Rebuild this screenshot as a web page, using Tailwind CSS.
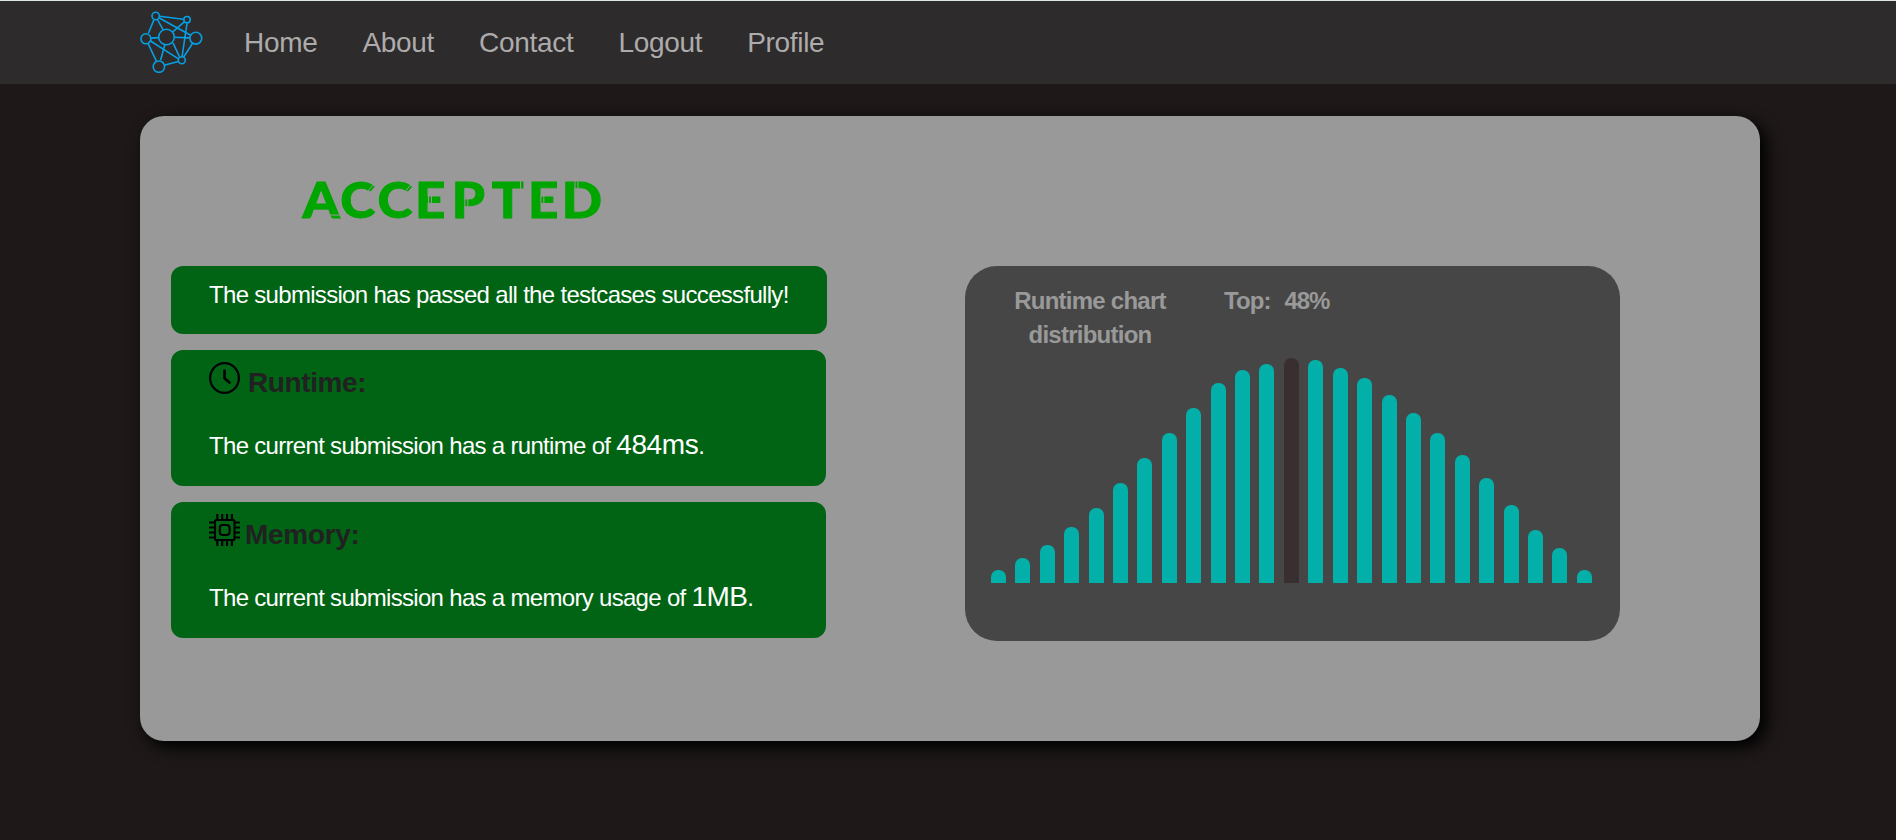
<!DOCTYPE html>
<html lang="en">
<head>
<meta charset="utf-8">
<title>Submission result</title>
<script src="https://cdn.jsdelivr.net/npm/@tailwindcss/browser@4"></script>
</head>
<body class="h-[840px] overflow-hidden bg-[#1e1918] font-['Liberation_Sans',Arial,sans-serif] tracking-[-0.69px]">
<nav class="flex h-[84px] items-center border-t border-[#dfe8e4] bg-[#2d2b2c] pl-[140px]">
  <svg class="mb-px h-[62px] w-[63px]" viewBox="140 11 63 62" fill="none" stroke="#069fe3" stroke-width="1.6">
    <path d="M159.600 16.300 183.200 19.200M159.300 18 190.600 35.200M154 19.600 148.400 33.200M157.600 19.900 163.200 29.900M184 22.200 172.200 32.300M187 23.400 182.100 56.500M151.200 38.100 158.800 37.600M174.300 37.300 189.700 37.900M150.600 41 178.400 58.800M173 42.800 179.500 56.800M148.100 43.700 156.400 61.200M164.800 44.800 160.600 60.300M192.600 43.200 183.700 57M165 65 178.300 61.400"/>
    <circle cx="155.700" cy="16" r="3.700"/><circle cx="187" cy="19.700" r="3.200"/>
    <circle cx="145.900" cy="38.800" r="5"/><circle cx="166.500" cy="37" r="7.800"/>
    <circle cx="195.800" cy="38.200" r="5.900"/><circle cx="181.800" cy="60.300" r="3.500"/>
    <circle cx="158.900" cy="66.700" r="5.700"/>
  </svg>
  <div class="ml-[41px] flex gap-[45px] text-[28px] leading-[42px] tracking-[-0.31px] text-[#adabab]">
    <a>Home</a><a>About</a><a>Contact</a><a>Logout</a><a>Profile</a>
  </div>
</nav>
<main class="mt-8 ml-[140px] flex h-[625px] w-[1620px] flex-col rounded-3xl bg-[#999] pl-[31px] shadow-[6px_6px_16px_1px_#000]">
  <svg class="mt-[55px] ml-[125px] h-[60px] w-[320px] shrink-0 overflow-visible" viewBox="296 171 320 60">
    <text transform="scale(1.07 1)" y="218" x="282.800 318 352.700 387.800 422.300 459.500 493.400 525.100" font-family="Lato" font-weight="900" font-size="49.500" letter-spacing="0" fill="#00a500" stroke="#00a500" stroke-width="0.900">ACCEPTED</text>
    <g stroke="#999" stroke-width="1">
      <path d="M329 215H340M367.500 191.500 374.500 183.500M370 193 377 185M405 191.500 412 183.500M407.500 193 414.500 185M428.500 195.500V203.500M431.500 195.500V203.500M464.800 199V208M467.800 199V208M520.500 180V189M540.800 195.500V203.500M543.800 195.500V203.500M575 180V189M578 180V189"/>
    </g>
  </svg>
  <div class="mt-[35px] flex items-start">
    <section class="flex w-[656px] flex-col gap-4 text-2xl leading-9 text-white">
      <div class="h-[68px] rounded-xl bg-[#006414] pt-[11px] pl-[38px]">The submission has passed all the testcases successfully!</div>
      <div class="h-[136px] w-[655px] rounded-xl bg-[#006414] pt-3 pl-[38px]">
        <h2 class="flex h-[42px] text-[28px] leading-[42px] font-bold tracking-[-0.4px] text-[#212121]">
          <svg class="h-8 w-[31px]" viewBox="0 0 31 32" fill="none" stroke="#000" stroke-width="2.200"><ellipse cx="15.500" cy="16" rx="14.400" ry="14.900"/><path d="M15.500 8.500V16.300L20.500 20.500" stroke-width="2.600" stroke-linecap="round" stroke-linejoin="round"/></svg>
          <span class="ml-2">Runtime:</span>
        </h2>
        <p class="mt-5 leading-[42px]">The current submission has a runtime of <span class="text-[28px] tracking-[-0.4px]">484ms</span>.</p>
      </div>
      <div class="h-[136px] w-[655px] rounded-xl bg-[#006414] pt-3 pl-[38px]">
        <h2 class="flex h-[42px] text-[28px] leading-[42px] font-bold tracking-[-0.3px] text-[#212121]">
          <svg class="h-8 w-[31px]" viewBox="0 0 31 32" fill="none" stroke="#000" stroke-width="2.100"><rect x="6" y="6" width="19.500" height="20" rx="1.500"/><rect x="10.800" y="11" width="9.800" height="10" rx="3"/><path d="M8.300 0V6M13.200 0V6M18 0V6M22.900 0V6M8.300 26V32M13.200 26V32M18 26V32M22.900 26V32M0 8.500H6M0 13.500H6M0 18.500H6M0 23.500H6M25 8.500H31M25 13.500H31M25 18.500H31M25 23.500H31"/></svg>
          <span class="ml-[5px]">Memory:</span>
        </h2>
        <p class="mt-5 leading-[42px]">The current submission has a memory usage of <span class="text-[28px] tracking-[-0.6px]">1MB</span>.</p>
      </div>
    </section>
    <section class="ml-[138px] flex h-[375px] w-[655px] flex-col rounded-[32px] bg-[#464646] px-[26px] pt-[18px]">
      <div class="flex h-[74px] text-2xl leading-[34px] font-bold tracking-[-0.75px] text-[#999]">
        <h3 class="w-[198px] text-center">Runtime chart distribution</h3>
        <p class="ml-[35px] tracking-[-0.9px]">Top:</p><p class="ml-[14px] tracking-[-1.1px]">48%</p>
      </div>
      <div id="bars" class="flex h-[225px] w-[601px] items-end justify-between"></div>
    </section>
  </div>
</main>
<script>
  const heights = [13,25,38,56,75,100,125,150,175,200,213,219,225,223,215,205,188,170,150,128,105,78,53,35,13];
  const chart = document.getElementById('bars');
  heights.forEach((h, i) => {
    const bar = document.createElement('div');
    bar.className = i === 12 ? 'w-[15px] rounded-t-[7px] bg-[#392f31]' : 'w-[15px] rounded-t-[7px] bg-[#03b0a9]';
    bar.style.height = h + 'px';
    chart.appendChild(bar);
  });
</script>
</body>
</html>
